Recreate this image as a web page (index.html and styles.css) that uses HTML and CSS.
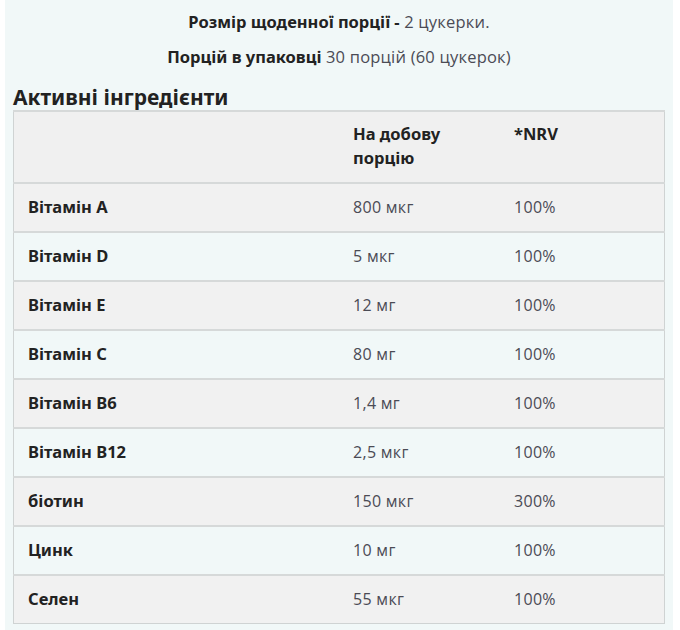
FILE: index.html
```html
<!DOCTYPE html>
<html lang="uk">
<head>
    <meta charset="UTF-8">
    <meta name="viewport" content="width=device-width, initial-scale=1.0">
    <title>Активні інгредієнти</title>
    <link rel="stylesheet" href="styles.css">
</head>
<body>

<div class="page">
    <p class="serving"><b>Розмір щоденної порції -</b> 2 цукерки.</p>
    <p class="serving"><b>Порцій в упаковці</b> 30 порцій (60 цукерок)</p>

    <h2 class="title">Активні інгредієнти</h2>

    <table class="facts">
        <thead>
            <tr>
                <th></th>
                <th>На добову<br>порцію</th>
                <th>*NRV</th>
            </tr>
        </thead>
        <tbody>
            <tr><td>Вітамін A</td><td>800 мкг</td><td>100%</td></tr>
            <tr><td>Вітамін D</td><td>5 мкг</td><td>100%</td></tr>
            <tr><td>Вітамін E</td><td>12 мг</td><td>100%</td></tr>
            <tr><td>Вітамін C</td><td>80 мг</td><td>100%</td></tr>
            <tr><td>Вітамін B6</td><td>1,4 мг</td><td>100%</td></tr>
            <tr><td>Вітамін B12</td><td>2,5 мкг</td><td>100%</td></tr>
            <tr><td>біотин</td><td>150 мкг</td><td>300%</td></tr>
            <tr><td>Цинк</td><td>10 мг</td><td>100%</td></tr>
            <tr><td>Селен</td><td>55 мкг</td><td>100%</td></tr>
        </tbody>
    </table>
</div>

</body>
</html>
```

FILE: styles.css
```css
body {
    margin: 0;
    background-color: white;
    font-family: "Open Sans", Arial, sans-serif;
}

.page {
    margin: 0 7px 0 5px;
    padding: 11px 8px 20px 8px;
    background-color: #f1f8f8;
    color: #4b4b55;
}

.serving {
    margin: 0 0 14px 0;
    text-align: center;
    font-size: 16.5px;
    line-height: 21px;
    letter-spacing: 0.2px;
}

.serving b,
.title,
.facts th,
.facts td:first-child {
    font-family: "Noto Sans", Arial, sans-serif;
    font-weight: bold;
    letter-spacing: 0;
    color: #222;
}

.serving b {
    font-size: 16.5px;
}

.title {
    margin: 17px 0 0 0;
    font-size: 21px;
    line-height: 26px;
}

.facts {
    width: 652px;
    border-collapse: collapse;
    border: 1px solid #cfd3d3;
    font-size: 16px;
    letter-spacing: 0.3px;
}

.facts th,
.facts td {
    text-align: left;
    vertical-align: top;
    padding: 11px 14px 12px 14px;
    line-height: 24px;
    border-top: 2px solid #d6d9d9;
}

.facts th,
.facts td:first-child {
    font-size: 16.5px;
}

.facts th {
    padding: 10px 14px 12px 14px;
    height: 48px;
    background-color: #f0f0f0;
}

.facts th:first-child { width: 297px; }
.facts th:nth-child(2) { width: 133px; }

.facts tbody tr:nth-child(odd) {
    background-color: #f1f1f1;
}

.facts tbody tr:nth-child(even) {
    background-color: #f1f8f8;
}
```
